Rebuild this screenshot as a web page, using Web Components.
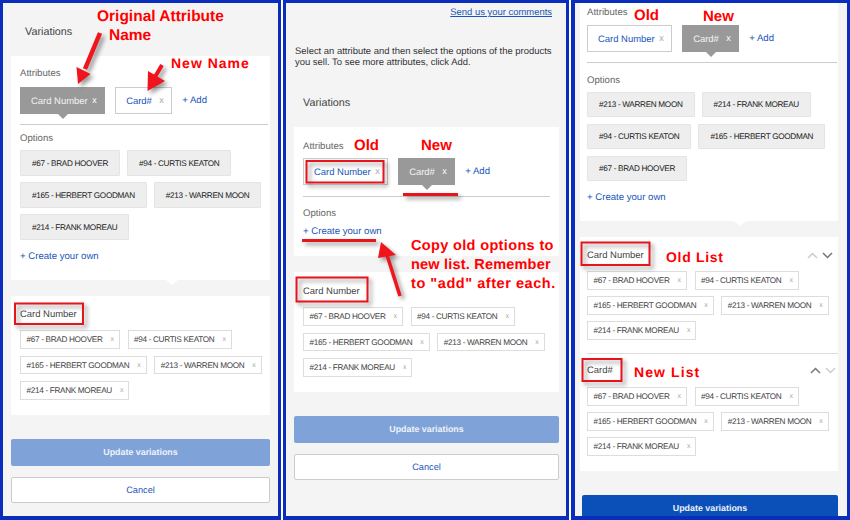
<!DOCTYPE html>
<html>
<head>
<meta charset="utf-8">
<title>Variations</title>
<style>
  html, body { margin: 0; padding: 0; background: #fff; }
  body { width: 850px; height: 520px; overflow: hidden; font-family: "Liberation Sans", Arial, sans-serif; text-rendering: geometricPrecision; }
</style>
</head>
<body>
<review-stage>
  <!-- left panel -->
  <review-panel style="--w:281px; --bl:3px; --pl:8px; --pr:8px;">
    <panel-heading style="--mt:21px; --ml:14px;">Variations</panel-heading>
    <attr-card style="--pl:9px; --pr:2px; --pt:11px; --after-label:8px; --after-opts:10px; --row:6px; --opt-h:26px; --pb:18px;">
      <attr-chip active>Card Number</attr-chip>
      <attr-chip>Card#</attr-chip>
      <option-chip slot="options">#67 - BRAD HOOVER</option-chip>
      <option-chip slot="options">#94 - CURTIS KEATON</option-chip>
      <option-chip slot="options">#165 - HERBERT GOODMAN</option-chip>
      <option-chip slot="options">#213 - WARREN MOON</option-chip>
      <option-chip slot="options">#214 - FRANK MOREAU</option-chip>
    </attr-card>
    <list-card style="--pl:9px;">
      <list-group>
        <span slot="title">Card Number</span>
        <value-tag>#67 - BRAD HOOVER</value-tag>
        <value-tag>#94 - CURTIS KEATON</value-tag>
        <value-tag>#165 - HERBERT GOODMAN</value-tag>
        <value-tag>#213 - WARREN MOON</value-tag>
        <value-tag>#214 - FRANK MOREAU</value-tag>
      </list-group>
    </list-card>
    <panel-actions state="disabled"></panel-actions>
  </review-panel>

  <!-- middle panel -->
  <review-panel style="--w:286px; --bl:3px; --pl:8px; --pr:7px;">
    <panel-intro></panel-intro>
    <panel-heading style="--mt:27px; --ml:9px;">Variations</panel-heading>
    <attr-card style="--pl:9px; --pr:9px; --pt:13px; --after-label:6px; --after-opts:0px; --after-hr:10px; --opt-gap:0px; --pb:19px; --hr-gap:11px;">
      <attr-chip>Card Number</attr-chip>
      <attr-chip active>Card#</attr-chip>
    </attr-card>
    <list-card style="--pl:9px; --pt:12.5px; --tt:10.5px;">
      <list-group>
        <span slot="title">Card Number</span>
        <value-tag>#67 - BRAD HOOVER</value-tag>
        <value-tag>#94 - CURTIS KEATON</value-tag>
        <value-tag>#165 - HERBERT GOODMAN</value-tag>
        <value-tag>#213 - WARREN MOON</value-tag>
        <value-tag>#214 - FRANK MOREAU</value-tag>
      </list-group>
    </list-card>
    <panel-actions state="disabled"></panel-actions>
  </review-panel>

  <!-- right panel, scrolled so the top of the card is cut off -->
  <review-panel style="--w:279px; --bl:4px; --pl:5px; --pr:9px;">
    <attr-card style="--pl:7px; --pr:1px; --pt:3px; --after-label:7px; --after-opts:10px; --after-hr:11px; --row:7px; --opt-h:25px; --pb:18px;">
      <attr-chip>Card Number</attr-chip>
      <attr-chip active>Card#</attr-chip>
      <option-chip slot="options">#213 - WARREN MOON</option-chip>
      <option-chip slot="options">#214 - FRANK MOREAU</option-chip>
      <option-chip slot="options">#94 - CURTIS KEATON</option-chip>
      <option-chip slot="options">#165 - HERBERT GOODMAN</option-chip>
      <option-chip slot="options">#67 - BRAD HOOVER</option-chip>
    </attr-card>
    <list-card style="--pl:7px; --tag-gap:6.5px;">
      <list-group sort="down">
        <span slot="title">Card Number</span>
        <value-tag>#67 - BRAD HOOVER</value-tag>
        <value-tag>#94 - CURTIS KEATON</value-tag>
        <value-tag>#165 - HERBERT GOODMAN</value-tag>
        <value-tag>#213 - WARREN MOON</value-tag>
        <value-tag>#214 - FRANK MOREAU</value-tag>
      </list-group>
      <list-group sort="up" divided>
        <span slot="title">Card#</span>
        <value-tag>#67 - BRAD HOOVER</value-tag>
        <value-tag>#94 - CURTIS KEATON</value-tag>
        <value-tag>#165 - HERBERT GOODMAN</value-tag>
        <value-tag>#213 - WARREN MOON</value-tag>
        <value-tag>#214 - FRANK MOREAU</value-tag>
      </list-group>
    </list-card>
    <panel-actions state="active" single style="margin-left:2px;"></panel-actions>
  </review-panel>

  <!-- red marks someone drew over the screenshots -->
  <ink-layer>
    <ink-text x="97" y="17" size="15.5">Original Attribute</ink-text>
    <ink-text x="109" y="36" size="15.5">Name</ink-text>
    <ink-text x="171" y="62.5" size="14" ls="1">New Name</ink-text>
    <ink-text x="354" y="146" size="15">Old</ink-text>
    <ink-text x="421" y="146" size="15">New</ink-text>
    <ink-text x="411" y="245.5" size="14.5" ls=".35">Copy old options to</ink-text>
    <ink-text x="411" y="264.5" size="14.5" ls=".2">new list. Remember</ink-text>
    <ink-text x="411" y="283.5" size="14.5" ls=".55">to "add" after each.</ink-text>
    <ink-text x="634" y="16" size="15">Old</ink-text>
    <ink-text x="703" y="17" size="15">New</ink-text>
    <ink-text x="666" y="256.5" size="14" ls=".7">Old List</ink-text>
    <ink-text x="634" y="371.5" size="14" ls="1.1">New List</ink-text>
  </ink-layer>
</review-stage>

<script>
class ReviewStage extends HTMLElement {
  constructor() {
    super();
    this.attachShadow({ mode: 'open' });
    this.shadowRoot.innerHTML = `
      <style>
        :host { display: flex; position: relative; gap: 2px; width: 850px; height: 520px; background: #fff; }
      </style>
      <slot></slot>
    `;
  }
}

class ReviewPanel extends HTMLElement {
  constructor() {
    super();
    this.attachShadow({ mode: 'open' });
    this.shadowRoot.innerHTML = `
      <style>
        :host {
          display: block;
          box-sizing: border-box;
          flex: none;
          width: var(--w);
          height: 520px;
          overflow: hidden;
          background: #f4f4f5;
          border: 3px solid #0b2dbb;
          border-left-width: var(--bl);
          border-bottom-width: 4px;
          padding: 0 var(--pr) 0 var(--pl);
        }
      </style>
      <slot></slot>
    `;
  }
}

class PanelHeading extends HTMLElement {
  constructor() {
    super();
    this.attachShadow({ mode: 'open' });
    this.shadowRoot.innerHTML = `
      <style>
        :host {
          display: block;
          margin: var(--mt) 0 17px var(--ml);
          padding-top: 1px;
          font-size: 10.8px;
          line-height: 14px;
          color: #444;
        }
      </style>
      <slot></slot>
    `;
  }
}

class PanelIntro extends HTMLElement {
  constructor() {
    super();
    this.attachShadow({ mode: 'open' });
    this.shadowRoot.innerHTML = `
      <style>
        :host { display: block; padding-top: 4px; font-size: 9.45px; color: #333; }
        .send { text-align: right; line-height: 12px; padding-right: 7px; color: #1a56b8; text-decoration: underline; }
        p { margin: 27px 0 0 1px; line-height: 11px; white-space: nowrap; }
      </style>
      <div class="send">Send us your comments</div>
      <p>Select an attribute and then select the options of the products<br>you sell. To see more attributes, click Add.</p>
    `;
  }
}

class AttrCard extends HTMLElement {
  constructor() {
    super();
    this.attachShadow({ mode: 'open' });
    this.shadowRoot.innerHTML = `
      <style>
        :host {
          display: block;
          position: relative;
          background: #fff;
          padding: var(--pt) var(--pr) var(--pb) var(--pl);
          margin-bottom: 16px;
          font-size: 9.6px;
        }
        :host::after {
          content: "";
          position: absolute;
          left: 50%;
          bottom: -5px;
          margin-left: 25px;
          border: 6px solid transparent;
          border-bottom: 0;
          border-top: 5px solid #fff;
        }
        .label { line-height: 12px; color: #666; padding-top: 1px; margin-bottom: -1px; }
        .attrs {
          display: flex;
          align-items: center;
          gap: 10px;
          margin-top: var(--after-label);
        }
        a { color: #1a56b8; text-decoration: none; font-size: 9.6px; }
        hr {
          border: 0;
          height: 1px;
          background: #ccc;
          margin: var(--hr-gap, 10px) 0 var(--after-hr, 7px);
        }
        .options {
          display: flex;
          flex-wrap: wrap;
          gap: var(--row, 0) 7px;
          margin: var(--opt-gap, 6px) 0 var(--after-opts);
        }
        .create { display: block; line-height: 12px; margin-top: 6px; padding-top: 1px; margin-bottom: -1px; }
      </style>
      <div class="label">Attributes</div>
      <div class="attrs"><slot></slot><a href="#">+ Add</a></div>
      <hr>
      <div class="label">Options</div>
      <div class="options"><slot name="options"></slot></div>
      <a class="create" href="#">+ Create your own</a>
    `;
  }
}

class AttrChip extends HTMLElement {
  constructor() {
    super();
    this.attachShadow({ mode: 'open' });
    this.shadowRoot.innerHTML = `
      <style>
        :host {
          display: flex;
          position: relative;
          align-items: center;
          justify-content: space-between;
          box-sizing: border-box;
          min-width: 57px;
          height: 27px;
          padding: 1px 7.5px 0 10px;
          gap: 4.5px;
          font-size: 9.45px;
          color: #1a56b8;
          background: #fff;
          border: 1px solid #ccc;
        }
        .x { font-size: 9px; color: #aaa; margin-bottom: 3px; }
        :host([active]) {
          background: #999;
          border-color: #999;
          color: #f4f4f4;
        }
        :host([active]) .x { color: #fff; }
        :host([active])::after {
          content: "";
          position: absolute;
          left: 50%;
          bottom: -6px;
          margin-left: -5px;
          border: 5px solid transparent;
          border-bottom: 0;
          border-top: 5px solid #999;
        }
      </style>
      <slot></slot><span class="x">x</span>
    `;
  }
}

class OptionChip extends HTMLElement {
  constructor() {
    super();
    this.attachShadow({ mode: 'open' });
    this.shadowRoot.innerHTML = `
      <style>
        :host {
          display: flex;
          align-items: center;
          box-sizing: border-box;
          height: var(--opt-h);
          padding: 0 11px;
          font-size: 8.2px;
          letter-spacing: -.32px;
          color: #222;
          background: #eee;
          border: 1px solid #e4e4e4;
          border-radius: 1px;
          white-space: nowrap;
        }
      </style>
      <slot></slot>
    `;
  }
}

class ListCard extends HTMLElement {
  constructor() {
    super();
    this.attachShadow({ mode: 'open' });
    this.shadowRoot.innerHTML = `
      <style>
        :host {
          display: block;
          background: #fff;
          padding: var(--pt, 11px) 0 15.5px var(--pl);
          margin-bottom: 24px;
        }
      </style>
      <slot></slot>
    `;
  }
}

class ListGroup extends HTMLElement {
  constructor() {
    super();
    this.attachShadow({ mode: 'open' });
    const sort = this.getAttribute('sort');
    const up = sort === 'down' ? '#ccc' : '#777';
    const down = sort === 'down' ? '#777' : '#ccc';
    const shift = sort === 'up' ? '2px' : '5px';
    this.shadowRoot.innerHTML = `
      <style>
        :host { display: block; }
        :host([divided]) { border-top: 1px solid #ddd; margin-top: 13.5px; padding-top: 9px; }
        .head { display: flex; justify-content: space-between; align-items: center; height: 12px; padding-top: 1px; margin-bottom: -1px; font-size: 9.45px; color: #444; }
        .sort { display: flex; gap: 4px; margin-right: ${shift}; }
        svg { display: block; }
        .tags { display: flex; flex-wrap: wrap; gap: var(--tag-gap, 7px) 7.5px; margin-top: var(--tt, 11px); padding-right: 2px; }
        :host([divided]) .tags { margin-top: 12px; }
      </style>
      <div class="head">
        <slot name="title"></slot>
        ${sort ? `<div class="sort">
          <svg width="11" height="7" viewBox="0 0 11 7"><path d="M1 6l4.5-4.5L10 6" fill="none" stroke="${up}" stroke-width="1.5"/></svg>
          <svg width="11" height="7" viewBox="0 0 11 7"><path d="M1 1l4.5 4.5L10 1" fill="none" stroke="${down}" stroke-width="1.5"/></svg>
        </div>` : ''}
      </div>
      <div class="tags"><slot></slot></div>
    `;
  }
}

class ValueTag extends HTMLElement {
  constructor() {
    super();
    this.attachShadow({ mode: 'open' });
    this.shadowRoot.innerHTML = `
      <style>
        :host {
          display: flex;
          align-items: center;
          box-sizing: border-box;
          height: 18.5px;
          padding: .5px 5px 0 5.5px;
          gap: 8px;
          font-size: 8.2px;
          letter-spacing: -.32px;
          color: #444;
          background: #fff;
          border: 1px solid #ddd;
          white-space: nowrap;
        }
        .x { color: #aaa; font-size: 7px; letter-spacing: 0; }
      </style>
      <slot></slot><span class="x">x</span>
    `;
  }
}

class PanelActions extends HTMLElement {
  constructor() {
    super();
    this.attachShadow({ mode: 'open' });
    const bg = this.getAttribute('state') === 'active' ? '#0b4fb8' : '#7fa2d8';
    this.shadowRoot.innerHTML = `
      <style>
        :host { display: flex; flex-direction: column; gap: 11px; }
        button {
          display: block;
          box-sizing: border-box;
          width: 100%;
          height: 26.5px;
          margin: 0;
          padding: 0;
          font: 9.2px "Liberation Sans", Arial, sans-serif;
          text-rendering: geometricPrecision;
          border-radius: 2px;
        }
        .primary { background: ${bg}; color: #eef2fa; border: 0; font-weight: bold; font-size: 8.9px; }
        .ghost { background: #fff; color: #1a56b8; border: 1px solid #ccc; }
      </style>
      <button class="primary">Update variations</button>
      ${this.hasAttribute('single') ? '' : '<button class="ghost">Cancel</button>'}
    `;
  }
}

class InkLayer extends HTMLElement {
  constructor() {
    super();
    this.attachShadow({ mode: 'open' });
    this.shadowRoot.innerHTML = `
      <style>
        :host { position: absolute; left: 0; top: 0; width: 850px; height: 520px; pointer-events: none; }
        svg { position: absolute; left: 0; top: 0; }
        g { filter: drop-shadow(3px 3px 2px rgba(0,0,0,.4)); }
        rect { fill: none; stroke: #e8141c; stroke-width: 2; }
      </style>
      <svg width="850" height="520" viewBox="0 0 850 520">
        <g>
          <path d="M100 33L85 69" stroke="#f0141c" stroke-width="4.5"/>
          <path d="M78 84L90.5 74 76.5 67z" fill="#f0141c"/>
          <path d="M162 65L155 77" stroke="#f0141c" stroke-width="4"/>
          <path d="M147.5 91L165 81 148 71z" fill="#f0141c"/>
          <rect x="15" y="303.5" width="68" height="20.5"/>
          <rect x="306.5" y="161" width="77" height="21.5"/>
          <path d="M403 194.5H458" stroke="#e8141c" stroke-width="3"/>
          <path d="M302 240.5H376" stroke="#e8141c" stroke-width="3"/>
          <path d="M381 242L378 258 396 255z" fill="#f0141c"/>
          <path d="M387 255L400 296" stroke="#f0141c" stroke-width="3.5"/>
          <rect x="296.5" y="277.5" width="71" height="24"/>
          <rect x="581.5" y="242.5" width="68" height="22.5"/>
          <rect x="582.5" y="359" width="39" height="22"/>
        </g>
      </svg>
      <slot></slot>
    `;
  }
}

class InkText extends HTMLElement {
  constructor() {
    super();
    this.attachShadow({ mode: 'open' });
    this.shadowRoot.innerHTML = `
      <style>
        :host {
          position: absolute;
          font-weight: bold;
          line-height: 20px;
          color: #f00;
          white-space: nowrap;
        }
      </style>
      <slot></slot>
    `;
  }
  connectedCallback() {
    this.style.left = this.getAttribute('x') + 'px';
    this.style.top = (parseFloat(this.getAttribute('y')) - 10) + 'px';
    this.style.fontSize = this.getAttribute('size') + 'px';
    if (this.hasAttribute('ls')) this.style.letterSpacing = this.getAttribute('ls') + 'px';
  }
}

customElements.define('review-panel', ReviewPanel);
customElements.define('panel-heading', PanelHeading);
customElements.define('panel-intro', PanelIntro);
customElements.define('attr-chip', AttrChip);
customElements.define('attr-card', AttrCard);
customElements.define('option-chip', OptionChip);
customElements.define('value-tag', ValueTag);
customElements.define('list-group', ListGroup);
customElements.define('list-card', ListCard);
customElements.define('panel-actions', PanelActions);
customElements.define('ink-text', InkText);
customElements.define('ink-layer', InkLayer);
customElements.define('review-stage', ReviewStage);
</script>
</body>
</html>
